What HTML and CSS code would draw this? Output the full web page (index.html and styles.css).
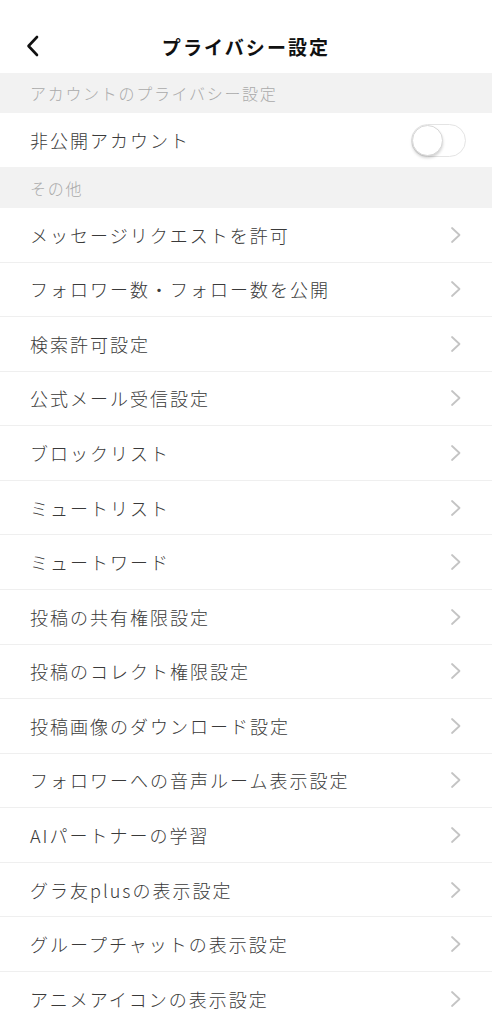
FILE: index.html
```html
<!DOCTYPE html>
<html lang="ja">
<head>
<meta charset="utf-8">
<link rel="stylesheet" href="styles.css">
</head>
<body>
<div class="page">
  <header class="nav">
    <span class="back">
      <svg width="16" height="22" viewBox="0 0 16 22"><path d="M12 2 L3.5 11 L12 20" fill="none" stroke="#111" stroke-width="2.6" stroke-linecap="round" stroke-linejoin="round"/></svg>
    </span>
    <h1 class="title">プライバシー設定</h1>
  </header>

  <div class="section">アカウントのプライバシー設定</div>
  <div class="row toggle-row">
    <span class="label">非公開アカウント</span>
    <span class="switch"><span class="knob"></span></span>
  </div>

  <div class="section section-2">その他</div>
  <ul class="list">
    <li class="row"><span class="label">メッセージリクエストを許可</span><svg class="chev" width="12" height="18" viewBox="0 0 12 18"><path d="M2 2 L9.5 9 L2 16" fill="none" stroke="#c4c4c4" stroke-width="1.8" stroke-linecap="round" stroke-linejoin="round"/></svg></li>
    <li class="row"><span class="label">フォロワー数・フォロー数を公開</span><svg class="chev" width="12" height="18" viewBox="0 0 12 18"><path d="M2 2 L9.5 9 L2 16" fill="none" stroke="#c4c4c4" stroke-width="1.8" stroke-linecap="round" stroke-linejoin="round"/></svg></li>
    <li class="row"><span class="label">検索許可設定</span><svg class="chev" width="12" height="18" viewBox="0 0 12 18"><path d="M2 2 L9.5 9 L2 16" fill="none" stroke="#c4c4c4" stroke-width="1.8" stroke-linecap="round" stroke-linejoin="round"/></svg></li>
    <li class="row"><span class="label">公式メール受信設定</span><svg class="chev" width="12" height="18" viewBox="0 0 12 18"><path d="M2 2 L9.5 9 L2 16" fill="none" stroke="#c4c4c4" stroke-width="1.8" stroke-linecap="round" stroke-linejoin="round"/></svg></li>
    <li class="row"><span class="label">ブロックリスト</span><svg class="chev" width="12" height="18" viewBox="0 0 12 18"><path d="M2 2 L9.5 9 L2 16" fill="none" stroke="#c4c4c4" stroke-width="1.8" stroke-linecap="round" stroke-linejoin="round"/></svg></li>
    <li class="row"><span class="label">ミュートリスト</span><svg class="chev" width="12" height="18" viewBox="0 0 12 18"><path d="M2 2 L9.5 9 L2 16" fill="none" stroke="#c4c4c4" stroke-width="1.8" stroke-linecap="round" stroke-linejoin="round"/></svg></li>
    <li class="row"><span class="label">ミュートワード</span><svg class="chev" width="12" height="18" viewBox="0 0 12 18"><path d="M2 2 L9.5 9 L2 16" fill="none" stroke="#c4c4c4" stroke-width="1.8" stroke-linecap="round" stroke-linejoin="round"/></svg></li>
    <li class="row"><span class="label">投稿の共有権限設定</span><svg class="chev" width="12" height="18" viewBox="0 0 12 18"><path d="M2 2 L9.5 9 L2 16" fill="none" stroke="#c4c4c4" stroke-width="1.8" stroke-linecap="round" stroke-linejoin="round"/></svg></li>
    <li class="row"><span class="label">投稿のコレクト権限設定</span><svg class="chev" width="12" height="18" viewBox="0 0 12 18"><path d="M2 2 L9.5 9 L2 16" fill="none" stroke="#c4c4c4" stroke-width="1.8" stroke-linecap="round" stroke-linejoin="round"/></svg></li>
    <li class="row"><span class="label">投稿画像のダウンロード設定</span><svg class="chev" width="12" height="18" viewBox="0 0 12 18"><path d="M2 2 L9.5 9 L2 16" fill="none" stroke="#c4c4c4" stroke-width="1.8" stroke-linecap="round" stroke-linejoin="round"/></svg></li>
    <li class="row"><span class="label">フォロワーへの音声ルーム表示設定</span><svg class="chev" width="12" height="18" viewBox="0 0 12 18"><path d="M2 2 L9.5 9 L2 16" fill="none" stroke="#c4c4c4" stroke-width="1.8" stroke-linecap="round" stroke-linejoin="round"/></svg></li>
    <li class="row"><span class="label">AIパートナーの学習</span><svg class="chev" width="12" height="18" viewBox="0 0 12 18"><path d="M2 2 L9.5 9 L2 16" fill="none" stroke="#c4c4c4" stroke-width="1.8" stroke-linecap="round" stroke-linejoin="round"/></svg></li>
    <li class="row"><span class="label">グラ友plusの表示設定</span><svg class="chev" width="12" height="18" viewBox="0 0 12 18"><path d="M2 2 L9.5 9 L2 16" fill="none" stroke="#c4c4c4" stroke-width="1.8" stroke-linecap="round" stroke-linejoin="round"/></svg></li>
    <li class="row"><span class="label">グループチャットの表示設定</span><svg class="chev" width="12" height="18" viewBox="0 0 12 18"><path d="M2 2 L9.5 9 L2 16" fill="none" stroke="#c4c4c4" stroke-width="1.8" stroke-linecap="round" stroke-linejoin="round"/></svg></li>
    <li class="row"><span class="label">アニメアイコンの表示設定</span><svg class="chev" width="12" height="18" viewBox="0 0 12 18"><path d="M2 2 L9.5 9 L2 16" fill="none" stroke="#c4c4c4" stroke-width="1.8" stroke-linecap="round" stroke-linejoin="round"/></svg></li>
  </ul>
</div>
</body>
</html>
```

FILE: styles.css
```css
* { box-sizing: border-box; }
html, body {
  margin: 0;
  padding: 0;
  background: #fff;
}
body {
  font-family: "Noto Sans CJK JP", "Noto Sans", sans-serif;
  color: #3b3b3b;
  overflow: hidden;
}
.page {
  width: 492px;
}
.nav {
  height: 73px;
  display: flex;
  align-items: center;
  justify-content: center;
  position: relative;
  padding-top: 20px;
}
.back {
  position: absolute;
  left: 25px;
  top: 35px;
  display: flex;
}
.title {
  margin: 0;
  font-size: 19px;
  font-weight: 700;
  color: #111;
  letter-spacing: 2.1px;
}
.section {
  background: #f2f2f2;
  height: 40px;
  display: flex;
  align-items: center;
  padding-left: 30px;
  font-size: 16px;
  font-weight: 300;
  color: #aaaaaa;
  letter-spacing: 1.7px;
}
.section-2 {
  height: 41px;
}
.list {
  list-style: none;
  margin: 0;
  padding: 0;
}
.row {
  height: 54.57px;
  display: flex;
  align-items: center;
  justify-content: space-between;
  padding: 0 30px 0 30px;
  border-bottom: 1px solid #efefef;
}
.toggle-row {
  height: 54px;
  border-bottom: none;
  padding-right: 26px;
}
.label {
  font-size: 18px;
  font-weight: 300;
  letter-spacing: 2px;
  color: #3a3a3a;
}
.chev {
  display: block;
}
.switch {
  width: 55px;
  height: 33px;
  border-radius: 17px;
  border: 1px solid #e4e4e4;
  background: #fff;
  display: flex;
  align-items: center;
}
.knob {
  width: 31px;
  height: 31px;
  border-radius: 50%;
  background: #fff;
  border: 1px solid #d8d8d8;
  box-shadow: 0 2px 3px rgba(0,0,0,0.18);
}
```
